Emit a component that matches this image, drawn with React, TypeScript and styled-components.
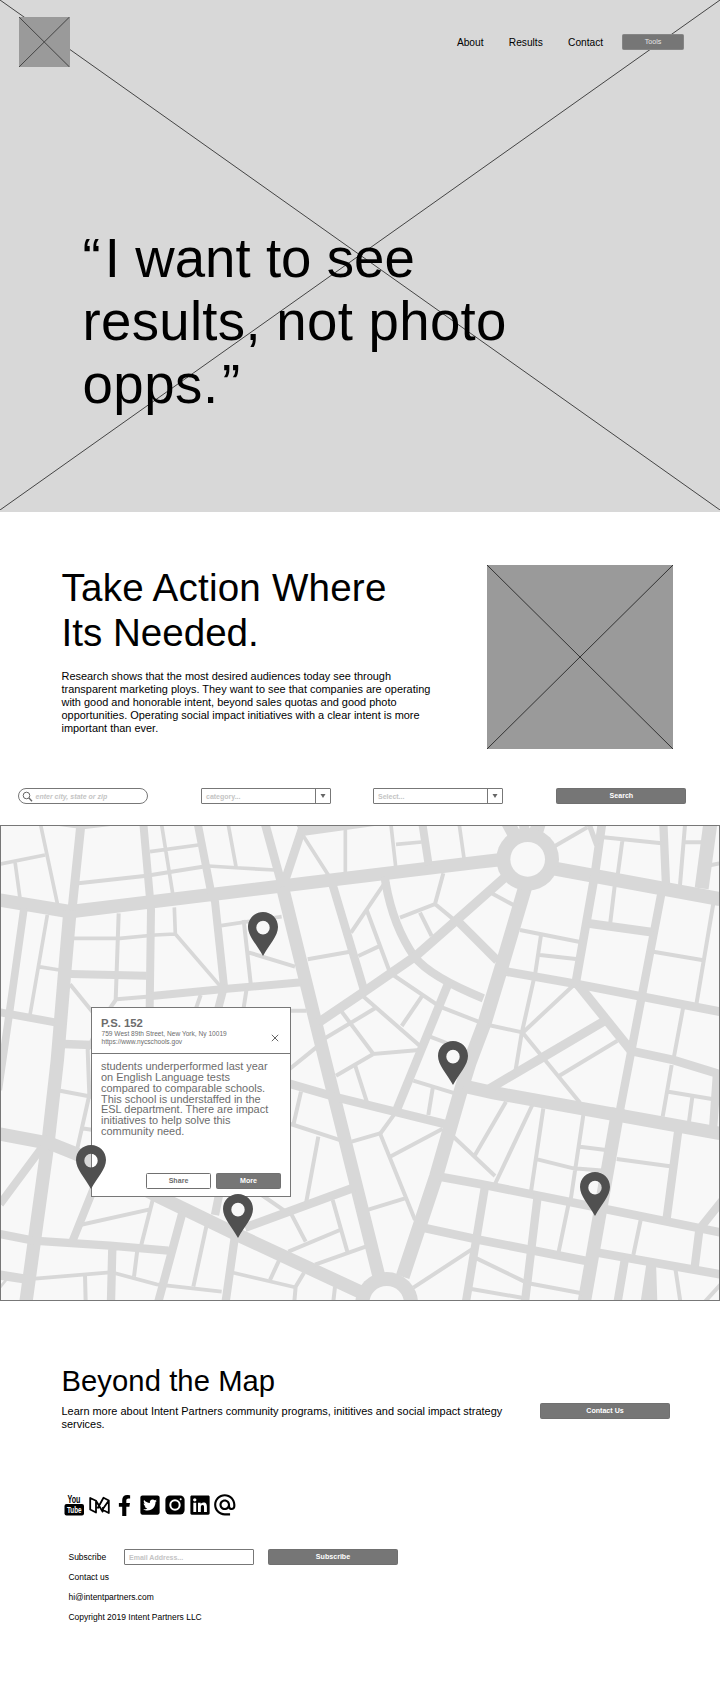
import React from "react";
import styled, { createGlobalStyle } from "styled-components";
import { FaFacebookF, FaLinkedin, FaTwitterSquare } from "react-icons/fa";
import { MdAlternateEmail } from "react-icons/md";

const GlobalStyle = createGlobalStyle`
  * { box-sizing: border-box; }
  body {
    margin: 0;
    background: #fff;
    color: #000;
    font-family: "Liberation Sans", Arial, Helvetica, sans-serif;
  }
  h1, h2, h3, p { margin: 0; font-weight: 400; }
`;

const Page = styled.div`
  width: 720px;
  height: 1694px;
  display: flex;
  flex-direction: column;
  overflow: hidden;
`;

const CrossSvg = styled.svg`
  display: block;
  width: 100%;
  height: 100%;
`;

const Cross = ({ color = "#444" }: { color?: string }) => (
  <CrossSvg viewBox="0 0 100 100" preserveAspectRatio="none" aria-hidden>
    <path d="M0 0 100 100M100 0 0 100" stroke={color} strokeWidth="1" vectorEffect="non-scaling-stroke" />
  </CrossSvg>
);

const Placeholder = styled.div<{ $w: number; $h: number }>`
  width: ${(p) => p.$w}px;
  height: ${(p) => p.$h}px;
  background: #9a9a9a;
  flex: none;
`;

const Line = styled.span<{ $track?: number }>`
  display: block;
  white-space: nowrap;
  letter-spacing: ${(p) => p.$track ?? 0}px;
`;

const OpenQuote = styled.span`
  margin-right: 4px;
`;

const CloseQuote = styled.span`
  margin-left: 3.5px;
`;

const Hero = styled.header`
  position: relative;
  height: 512px;
  background: #d8d8d8;
  flex: none;
`;

const HeroBackdrop = styled.div`
  position: absolute;
  inset: 0 0 2px;
`;

const HeroContent = styled.div`
  position: relative;
`;

const TopBar = styled.div`
  display: flex;
  justify-content: space-between;
  align-items: flex-start;
  padding: 17px 36px 0 19.4px;
`;

const Nav = styled.nav`
  display: flex;
  align-items: center;
  gap: 25.3px;
  margin-top: 16.5px;
  font-size: 10.2px;
`;

const NavLink = styled.a`
  line-height: 16px;
  padding-top: 1px;
`;

const Button = styled.button<{ $w: number; $outline?: boolean; $light?: boolean }>`
  width: ${(p) => p.$w}px;
  height: 16px;
  flex: none;
  padding: 0;
  border: 1px solid ${(p) => (p.$light ? "#858585" : "#707070")};
  border-radius: 1.5px;
  background: ${(p) => (p.$outline ? "#fff" : "#767676")};
  color: ${(p) => (p.$outline ? "#6c6c6c" : p.$light ? "#e6e6e6" : "#fff")};
  font: ${(p) => (p.$light ? 400 : 700)} 7.1px/13px "Liberation Sans", Arial, sans-serif;
  text-align: center;
`;

const ToolsSlot = styled.div`
  margin-left: -6.5px;
  display: flex;
`;

const Quote = styled.h1`
  margin: 160px 0 0 82.5px;
  font-size: 54.6px;
  line-height: 63.2px;
`;

const Intro = styled.section`
  display: flex;
  justify-content: space-between;
  padding: 53px 47px 0 61.5px;
  height: 275px;
  flex: none;
`;

const IntroTitle = styled.h2`
  font-size: 38.6px;
  line-height: 44.6px;
  margin-top: 1px;
`;

const Copy = styled.p`
  font-size: 10.94px;
  line-height: 13px;
  white-space: pre-line;
`;

const IntroCopy = styled(Copy)`
  margin-top: 15px;
`;

const Filters = styled.form`
  display: flex;
  padding: 1px 0 0 17.5px;
  height: 38px;
  flex: none;
`;

const Field = styled.div<{ $round?: boolean; $gap?: number }>`
  display: flex;
  align-items: center;
  width: 130px;
  height: 16px;
  flex: none;
  margin-right: ${(p) => p.$gap ?? 0}px;
  border: 1px solid #777;
  border-radius: ${(p) => (p.$round ? "8px" : "1px")};
  background: #fff;
  color: #c4c4c4;
  font-size: 7px;
  font-weight: 700;
  line-height: 13px;
  padding-left: ${(p) => (p.$round ? 3 : 4)}px;
`;

const Hint = styled.span<{ $italic?: boolean }>`
  flex: 1;
  font-style: ${(p) => (p.$italic ? "italic" : "normal")};
`;

const Caret = styled.span`
  display: flex;
  align-items: center;
  justify-content: center;
  width: 15px;
  height: 14px;
  border-left: 1px solid #777;
`;

const MapArea = styled.section`
  position: relative;
  height: 476px;
  flex: none;
  border: 1px solid #777;
  background: #f8f8f8;
`;

const MapSvg = styled.svg`
  display: block;
  width: 718px;
  height: 474px;
`;

const PinSvg = styled.svg<{ $x: number; $y: number }>`
  position: absolute;
  left: ${(p) => p.$x - 16}px;
  top: ${(p) => p.$y - 1}px;
  width: 30px;
  height: 44px;
`;

const Popup = styled.article`
  position: absolute;
  left: 90px;
  top: 181px;
  width: 200px;
  height: 190px;
  display: flex;
  flex-direction: column;
  background: #fff;
  border: 1px solid #777;
  color: #6c6c6c;
`;

const PopupHead = styled.div`
  display: flex;
  justify-content: space-between;
  height: 46px;
  padding: 8px 11px 0 9px;
  border-bottom: 1px solid #777;
`;

const PopupTitle = styled.h3`
  font-size: 11.3px;
  line-height: 14px;
  font-weight: 700;
`;

const PopupMeta = styled.p`
  font-size: 6.6px;
  line-height: 7.6px;
  padding-left: 0.5px;
  white-space: pre-line;
`;

const CloseIcon = styled.svg`
  width: 8px;
  height: 8px;
  margin-top: 18px;
`;

const PopupText = styled.p`
  flex: 1;
  padding: 7px 0 0 9px;
  font-size: 10.95px;
  line-height: 10.85px;
  white-space: pre-line;
`;

const PopupActions = styled.div`
  display: flex;
  justify-content: flex-end;
  gap: 5px;
  padding: 0 9px 7px 0;
`;

const Beyond = styled.section`
  display: flex;
  justify-content: space-between;
  padding: 63px 50px 0 61.5px;
  height: 192px;
  flex: none;
`;

const BeyondTitle = styled.h2`
  font-size: 29.2px;
  line-height: 34px;
  letter-spacing: 0.08px;
  margin-bottom: 6.5px;
`;

const ContactSlot = styled.div`
  display: flex;
  align-items: flex-start;
  padding-top: 39px;
`;

const Footer = styled.footer`
  display: flex;
  flex-direction: column;
`;

const Social = styled.div`
  display: flex;
  align-items: center;
  height: 24px;
  padding-left: 64px;
`;

const SocialItem = styled.span<{ $w: number; $gap?: number }>`
  display: flex;
  align-items: center;
  justify-content: center;
  width: ${(p) => p.$w}px;
  margin-right: ${(p) => p.$gap ?? 5}px;
  flex: none;

  svg { flex: none; }
`;

const FooterRows = styled.div`
  display: flex;
  flex-direction: column;
  padding: 30px 0 0 68.5px;
  font-size: 8.48px;
`;

const FooterRow = styled.div`
  display: flex;
  align-items: center;
  height: 20.1px;
`;

const SubscribeLabel = styled.span`
  width: 55.5px;
`;

// [stroke width, path]
const roads: [number, string][] = [
  [40, "M0 240 210 275 1440 126 1510 118"],
  [42, "M1583 131 2160 237"],
  [40, "M1583 118 1522 5"],
  [30, "M1583 118 1571 5"],
  [42, "M1583 118 1618 5"],
  [40, "M210 272 192 480 172 720 145 960 78 1445"],
  [27, "M243 10 216 270"],
  [10, "M170 12 250 23 340 12"],
  [24, "M430 10 453 270 449 565"],
  [24, "M593 10 632 210 645 245 672 500 655 565"],
  [26, "M795 10 847 200"],
  [39, "M847 200 975 720 1137 1370"],
  [26, "M912 10 852 190"],
  [11, "M908 45 985 165M1036 22 1036 165M1173 15 1187 140M1188 73 1265 66M1378 15 1392 115"],
  [24, "M1267 10 1286 135"],
  [11, "M625 138 720 144 825 150M685 15 708 140M450 95 595 75M485 15 518 220M122 15 172 250M0 132 135 105M45 125 60 235"],
  [12, "M235 190 440 167 608 140"],
  [23, "M72 265 28 580 -5 810"],
  [11, "M142 285 90 585M115 440 178 450"],
  [24, "M0 577 165 607M212 462 440 467"],
  [11, "M220 355 360 355 465 345 525 342M523 262 526 342 662 500"],
  [12, "M356 280 350 455 347 540 325 572M210 493 285 585M350 538 440 530M602 525 588 565"],
  [24, "M455 528 672 507 905 487"],
  [11, "M663 317 845 290"],
  [25, "M190 672 275 675"],
  [12, "M285 640 263 690 268 825 232 985M180 812 275 830M245 925 280 930"],
  [40, "M0 942 150 970 230 1002 480 1132 720 1248 1090 1420"],
  [24, "M128 980 0 1152M283 1100 218 1262"],
  [12, "M240 1215 450 1168M458 1140 423 1278"],
  [25, "M0 1242 100 1262 330 1277 505 1292M548 1175 475 1445M706 1240 677 1445M660 1110 645 1185M337 1280 333 1445"],
  [12, "M620 1215 580 1400M412 1290 402 1370M255 1365 257 1445"],
  [11, "M340 1358 470 1393 665 1415M105 1376 330 1357M700 1358 885 1402"],
  [28, "M0 1365 75 1377"],
  [8, "M0 1402 22 1375"],
  [12, "M731 300 752 490M745 397 885 440M740 505 730 570M923 418 1050 395"],
  [25, "M998 195 1092 510"],
  [12, "M1150 195 1053 338M1100 270 1167 450M1075 408 1135 380"],
  [25, "M1154 170 1157 190Q1180 320 1243 410Q1290 470 1450 535"],
  [28, "M955 608 1085 520 1245 410 1370 300 1515 172"],
  [12, "M1200 293 1305 252 1330 160M1305 252 1368 304M1260 278 1295 348"],
  [26, "M1370 300 1492 422"],
  [12, "M1475 220 1542 256"],
  [42, "M1579 190 1505 440 1455 605 1408 730 1380 820 1308 1070 1208 1370"],
  [12, "M865 572 920 572M1085 525 1260 678M1175 462 1320 560 1435 605M1265 530 1205 618"],
  [12, "M1025 575 1120 702 1258 690M1120 702 1008 767M970 658 1125 565M948 683 865 750"],
  [26, "M1347 485 1185 882"],
  [12, "M1185 880 1140 942M1290 650 1355 675M1065 735 1102 850M1240 782 1365 820M1298 805 1285 885M903 815 880 915"],
  [26, "M865 790 1010 832 1335 912"],
  [12, "M872 912 1025 962M955 950 918 1150M1055 965 1140 940 1245 1200M1170 1010 1328 926M1105 1169 1215 1135"],
  [26, "M735 1223 1062 1103"],
  [12, "M785 1125 865 1180M870 1175 917 1265M865 1295 1020 1230M998 1140 1042 1295M945 1334 1097 1280M840 1315 810 1380M912 1358 887 1400 883 1445M1005 1400 1000 1445"],
  [12, "M1358 948 1485 1068M1425 1005 1518 845M1240 1403 1420 1285M1425 1313 1572 1384M1410 1406 1570 1434"],
  [26, "M1320 1070 1440 1092 1830 1170 2160 1237M1270 1223 1440 1260 1760 1323M1795 1298 2160 1363"],
  [25, "M1454 1105 1398 1445"],
  [40, "M1390 798 1480 818 2160 940"],
  [12, "M1597 855 1485 1092M1630 865 1593 1115M1750 885 1712 1140M1740 980 1818 990M1612 1018 1720 1045 1815 1052"],
  [26, "M1806 10 1785 160 1727 490"],
  [25, "M1985 215 1925 530 1860 870"],
  [40, "M1855 865 1753 1445"],
  [25, "M1990 10 1998 195"],
  [12, "M2055 15 2040 195M2055 67 2105 67M2130 136 2160 130M1810 52 1985 70M1867 62 1853 165M1665 78 1762 22"],
  [16, "M1768 15 1790 75"],
  [42, "M2131 10 2105 205"],
  [12, "M1845 190 1830 315M2140 250 2088 560M1960 395 2110 421M1560 330 1740 366M1623 345 1605 465M1620 405 1728 417"],
  [26, "M1765 310 1960 337M1520 455 1730 492 2160 575"],
  [12, "M1602 475 1565 640 1546 755M1718 498 1568 638M1465 615 1567 637M1568 638 1740 848M1852 662 1678 767M2050 560 2020 720"],
  [28, "M1735 495 1900 700"],
  [27, "M1815 602 1640 705 1465 808"],
  [26, "M1890 692 2020 720 2160 763"],
  [12, "M2015 735 1988 890M2005 815 2140 838M2077 830 2067 905M1850 1017 2010 1039M1922 1200 1900 1305M1705 1155 1675 1300M1585 1390 1745 1420M2026 1345 2041 1445M2165 1390 2112 1448"],
  [25, "M2151 760 2139 930M2035 930 2000 1195M2170 1138 2100 1225M2098 1230 2083 1350M1614 1120 1575 1445M1875 1315 1853 1445"],
];

const pins: [number, number][] = [
  [263, 86.5],
  [453, 215.5],
  [595.4, 346.5],
  [91.3, 319.5],
  [237.7, 368.5],
];

const StreetMap = () => (
  <MapSvg viewBox="3 18 2154 1422" preserveAspectRatio="none" aria-hidden>
    <g fill="none" stroke="#d8d8d8">
      {roads.map(([w, d]) => (
        <path key={d} d={d} strokeWidth={w} />
      ))}
    </g>
    <g fill="#d8d8d8">
      <path d="M890 17H1130L908 48Z" />
      <path d="M1940 1325H1968L1972 1445H1922Z" />
      <circle cx="1583" cy="118" r="94" />
      <circle cx="1160" cy="1450" r="94" />
    </g>
    <g fill="#f8f8f8">
      <circle cx="1583" cy="118" r="52" />
      <circle cx="1160" cy="1450" r="52" />
    </g>
  </MapSvg>
);

const Pin = ({ x, y }: { x: number; y: number }) => (
  <PinSvg $x={x} $y={y} viewBox="0 0 30 44">
    <path
      fill="#505050"
      fillRule="evenodd"
      d="M15 0C6.7 0 0 6.6 0 15C0 24 8.5 32 15 44C21.500 32 30 24 30 15C30 6.600 23.300 0 15 0ZM15 8.800A6.700 6.900 0 1 1 15 22.600A6.700 6.900 0 1 1 15 8.800Z"
    />
  </PinSvg>
);

const YouTubeIcon = () => (
  <svg width="20" height="22" viewBox="0 0 20 22">
    <rect x=".5" y="10" width="19.500" height="11.500" rx="2" />
    <g fontFamily="Liberation Sans, Arial, sans-serif" fontWeight="700" textAnchor="middle">
      <text transform="translate(10 8.600) scale(.66 1)" fontSize="10.800">You</text>
      <text transform="translate(10.200 19.200) scale(.7 1)" fontSize="9" fill="#fff">Tube</text>
    </g>
  </svg>
);

const MediumIcon = () => (
  <svg width="21" height="19" viewBox="0 0 21 19" fill="none" stroke="#000" strokeWidth="1.800" strokeLinejoin="round">
    <path d="M1.200 2 7 4.800V16.500L1.200 13.500ZM7 4.800 14 16.200M8.500 12.500 14.500 1.800 19.800 4.500V17L14 14V11M19.800 4.500 13.500 13.500" />
  </svg>
);

const InstagramIcon = () => (
  <svg width="20" height="20" viewBox="0 0 20 20">
    <rect x=".4" y=".4" width="19.200" height="19.200" rx="4.500" />
    <circle cx="10" cy="10" r="4.700" fill="none" stroke="#fff" strokeWidth="2" />
    <circle cx="15.700" cy="4.300" r="1" fill="#fff" />
  </svg>
);

const CaretIcon = () => (
  <Caret>
    <svg width="6" height="4" viewBox="0 0 6 4"><path d="M.5 0h5L3 4z" fill="#666" /></svg>
  </Caret>
);

export default function App() {
  return (
    <Page>
      <GlobalStyle />
      <Hero>
        <HeroBackdrop><Cross /></HeroBackdrop>
        <HeroContent>
          <TopBar>
            <Placeholder $w={50.5} $h={50}><Cross /></Placeholder>
            <Nav>
              <NavLink>About</NavLink>
              <NavLink>Results</NavLink>
              <NavLink>Contact</NavLink>
              <ToolsSlot><Button $w={62} $light>Tools</Button></ToolsSlot>
            </Nav>
          </TopBar>
          <Quote>
            <Line $track={0.05}><OpenQuote>“</OpenQuote>I want to see</Line>
            <Line $track={0.3}>results, not photo</Line>
            <Line $track={0.5}>opps.<CloseQuote>”</CloseQuote></Line>
          </Quote>
        </HeroContent>
      </Hero>

      <Intro>
        <div>
          <IntroTitle>
            <Line $track={0.2}>Take Action Where</Line>
            <Line>Its Needed.</Line>
          </IntroTitle>
          <IntroCopy>
            {"Research shows that the most desired audiences today see through\ntransparent marketing ploys. They want to see that companies are operating\nwith good and honorable intent, beyond sales quotas and good photo\nopportunities. Operating social impact initiatives with a clear intent is more\nimportant than ever."}
          </IntroCopy>
        </div>
        <Placeholder $w={186} $h={184}><Cross color="#333" /></Placeholder>
      </Intro>

      <Filters>
        <Field $round $gap={53.5}>
          <svg width="14" height="11" viewBox="0 0 14 11" fill="none" stroke="#666" strokeWidth="1">
            <circle cx="4.500" cy="4.500" r="3.300" />
            <path d="M7 7l3 3.300" strokeWidth="1.300" />
          </svg>
          <Hint $italic>enter city, state or zip</Hint>
        </Field>
        <Field $gap={42}><Hint>category...</Hint><CaretIcon /></Field>
        <Field $gap={53.4}><Hint>Select...</Hint><CaretIcon /></Field>
        <Button $w={130} type="button">Search</Button>
      </Filters>

      <MapArea>
        <StreetMap />
        <Popup>
          <PopupHead>
            <div>
              <PopupTitle>P.S. 152</PopupTitle>
              <PopupMeta>{"759 West 89th Street, New York, Ny 10019\nhttps://www.nycschools.gov"}</PopupMeta>
            </div>
            <CloseIcon viewBox="0 0 8 8"><path d="M.8.8l6.400 6.400M7.200.8.8 7.200" stroke="#666" /></CloseIcon>
          </PopupHead>
          <PopupText>
            {"students underperformed last year\non English Language tests\ncompared to comparable schools.\nThis school is understaffed in the\nESL department. There are impact\ninitiatives to help solve this\ncommunity need."}
          </PopupText>
          <PopupActions>
            <Button $w={65} $outline>Share</Button>
            <Button $w={65}>More</Button>
          </PopupActions>
        </Popup>
        {pins.map(([x, y]) => <Pin key={x} x={x} y={y} />)}
      </MapArea>

      <Beyond>
        <div>
          <BeyondTitle>Beyond the Map</BeyondTitle>
          <Copy>{"Learn more about Intent Partners community programs, inititives and social impact strategy\nservices."}</Copy>
        </div>
        <ContactSlot><Button $w={130}>Contact Us</Button></ContactSlot>
      </Beyond>

      <Footer>
        <Social>
          <SocialItem $w={20}><YouTubeIcon /></SocialItem>
          <SocialItem $w={21} $gap={4}><MediumIcon /></SocialItem>
          <SocialItem $w={20.5}><FaFacebookF size={21} /></SocialItem>
          <SocialItem $w={20}><FaTwitterSquare size={22} /></SocialItem>
          <SocialItem $w={20}><InstagramIcon /></SocialItem>
          <SocialItem $w={20} $gap={4}><FaLinkedin size={22} /></SocialItem>
          <SocialItem $w={22}><MdAlternateEmail size={25.5} /></SocialItem>
        </Social>
        <FooterRows>
          <FooterRow>
            <SubscribeLabel>Subscribe</SubscribeLabel>
            <Field $gap={14}><Hint>Email Address...</Hint></Field>
            <Button $w={130}>Subscribe</Button>
          </FooterRow>
          <FooterRow>Contact us</FooterRow>
          <FooterRow>hi@intentpartners.com</FooterRow>
          <FooterRow>Copyright 2019 Intent Partners LLC</FooterRow>
        </FooterRows>
      </Footer>
    </Page>
  );
}
